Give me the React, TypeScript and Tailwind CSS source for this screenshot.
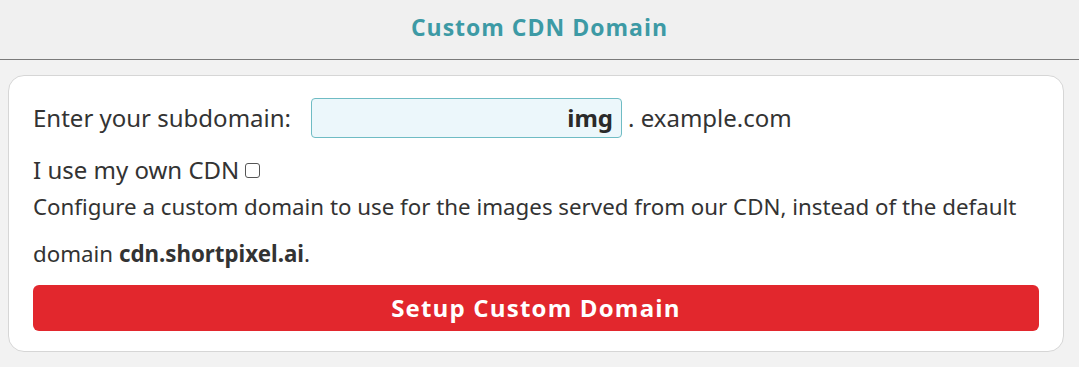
export default function App() {
  return (
    <div className="min-h-[367px] w-full bg-[#f2f2f2] font-['Noto_Sans','Open_Sans',sans-serif] text-[#333]">
      <div className="flex h-[60px] items-center justify-center border-b border-[#7a7a7a] bg-[#f0f0f0] pb-1">
        <h1 className="font-['Open_Sans',sans-serif] text-[23px] font-bold tracking-[1px] text-[#3d9aa5]">
          Custom CDN Domain
        </h1>
      </div>
      <div className="pt-[15px] pl-2 pr-[15px]">
        <div className="rounded-2xl border border-[#d6d6d6] bg-white pt-[22px] pr-6 pb-5 pl-6">
          <div className="flex h-[40px] items-center text-[24px] leading-[30px]">
            <span className="w-[278px]">Enter your subdomain:</span>
            <div className="flex h-[40px] w-[311px] items-center justify-end rounded border border-[#6fbcc4] bg-[#ecf7fb] px-2">
              <span className="font-bold text-[#2a2a2a]">img</span>
            </div>
            <span className="ml-1.5">. example.com</span>
          </div>
          <div className="mt-[17px] flex items-center text-[24px] leading-[30px]">
            <span>I use my own CDN</span>
            <span className="ml-1.5 inline-block h-[15px] w-[15px] rounded-[3px] border border-[#555]" />
          </div>
          <p className="mt-[-2px] text-[22.3px] leading-[47px]">
            Configure a custom domain to use for the images served from our CDN, instead of the default
            domain <b>cdn.shortpixel.ai</b>.
          </p>
          <button className="mt-[8px] flex h-[46px] w-full items-center justify-center rounded-md bg-[#e2272d] font-['Open_Sans',sans-serif] text-[24px] font-bold tracking-[1.2px] text-white">
            Setup Custom Domain
          </button>
        </div>
      </div>
    </div>
  );
}
